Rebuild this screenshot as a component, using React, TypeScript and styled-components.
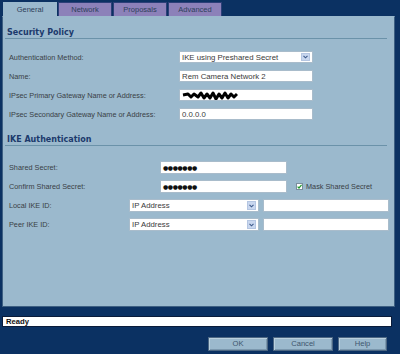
import React from "react";
import styled, { createGlobalStyle } from "styled-components";

const Global = createGlobalStyle`
  html, body { margin: 0; padding: 0; background: #0b3162; }
  body { width: 400px; height: 354px; overflow: hidden; font-family: "Liberation Sans", Arial, sans-serif; }
`;

const Page = styled.div`
  width: 400px;
  height: 354px;
  display: flex;
  flex-direction: column;
  background: #0b3162;
  box-sizing: border-box;
  padding-top: 2px;
`;

const TabBar = styled.div`
  display: flex;
  gap: 1px;
  padding-left: 3px;
  height: 14px;
  box-sizing: border-box;
`;

const Tab = styled.div<{ $active?: boolean }>`
  width: 54px;
  height: ${(p) => (p.$active ? "15px" : "14px")};
  box-sizing: border-box;
  background: ${(p) => (p.$active ? "#9bb9cd" : "#8c81b9")};
  border: 1px solid ${(p) => (p.$active ? "#9bb9cd" : "#2c3f78")};
  border-bottom: none;
  color: #2d3f5a;
  font-size: 7.5px;
  line-height: 13px;
  text-align: center;
  position: relative;
  z-index: 1;
`;

const Panel = styled.div`
  margin: 0 5px 0 2px;
  height: 291px;
  box-sizing: border-box;
  background: #9bb9cd;
  border: 1px solid #3d5f82;
  border-top-color: #9bb9cd;
  padding: 11px 7px 0 2px;
  display: flex;
  flex-direction: column;
`;

const SectionTitle = styled.div<{ $gap: number }>`
  margin-top: ${(p) => p.$gap}px;
  height: 11px;
  box-sizing: border-box;
  padding-left: 2px;
  border-bottom: 1px solid #6b92a9;
  font-family: "DejaVu Sans", Verdana, sans-serif;
  font-weight: bold;
  font-size: 8px;
  line-height: 10px;
  color: #1c3a6c;
`;

const Rows = styled.div<{ $gap: number; $rowGap: number }>`
  margin-top: ${(p) => p.$gap}px;
  display: flex;
  flex-direction: column;
  gap: ${(p) => p.$rowGap}px;
  padding-left: 4px;
`;

const Row = styled.div<{ $h: number }>`
  display: flex;
  align-items: center;
  height: ${(p) => p.$h}px;
`;

const Label = styled.div<{ $w: number }>`
  width: ${(p) => p.$w}px;
  flex: none;
  font-size: 7.3px;
  color: #3a3f45;
  white-space: nowrap;
`;

const Field = styled.div<{ $w: number }>`
  width: ${(p) => p.$w}px;
  height: 100%;
  flex: none;
  box-sizing: border-box;
  background: #ffffff;
  border: 1px solid #a9bccb;
  font-size: 7.8px;
  color: #3a3a3a;
  padding-left: 2px;
  display: flex;
  align-items: center;
  position: relative;
  white-space: nowrap;
  overflow: hidden;
`;

const Dots = styled.span`
  font-family: "DejaVu Sans", sans-serif;
  font-size: 6px;
  letter-spacing: -0.4px;
  color: #111;
  font-weight: bold;
`;

const Arrow = styled.span`
  position: absolute;
  right: 2px;
  top: 1px;
  bottom: 1px;
  width: 9px;
  background: #c9d7ef;
  border: 1px solid #b5c6e2;
  box-sizing: border-box;
  display: flex;
  align-items: center;
  justify-content: center;
`;

const Spacer = styled.div<{ $w: number }>`
  width: ${(p) => p.$w}px;
  flex: none;
`;

const Check = styled.span`
  width: 7px;
  height: 7px;
  box-sizing: border-box;
  background: #fff;
  border: 1px solid #7a8d9c;
  display: flex;
  align-items: center;
  justify-content: center;
  margin-right: 3px;
  flex: none;
`;

const CheckLabel = styled.span`
  font-size: 7.3px;
  color: #3a3f45;
  white-space: nowrap;
`;

const StatusBar = styled.div`
  margin: 9px 0 0 2px;
  width: 390px;
  height: 11px;
  box-sizing: border-box;
  background: #ffffff;
  border: 1px solid #0a1c3a;
  padding-left: 3px;
  font-weight: bold;
  font-size: 7.7px;
  line-height: 9px;
  color: #111;
`;

const ButtonRow = styled.div`
  margin-top: 10px;
  display: flex;
  justify-content: flex-end;
  gap: 5px;
  padding-right: 13px;
`;

const Button = styled.div<{ $w: number }>`
  width: ${(p) => p.$w}px;
  height: 14px;
  box-sizing: border-box;
  background: #9bb9cd;
  border: 1px solid #4c6783;
  box-shadow: inset 1px 1px 0 #b9d0de, inset -1px -1px 0 #7b98ae;
  color: #3e566d;
  font-size: 7.6px;
  line-height: 12px;
  text-align: center;
`;

const Chevron = () => (
  <svg width="5" height="4" viewBox="0 0 5 4">
    <path d="M0.5 0.8 L2.5 2.8 L4.5 0.8" fill="none" stroke="#3d5a8a" strokeWidth="1.1" />
  </svg>
);

const Scribble = () => (
  <svg width="56" height="9" viewBox="0 0 56 9">
    <path
      d="M1 4 L6 3 L9 6 L12 3 L16 6 L19 2 L22 7 L25 3 L28 7 L31 2 L34 8 L37 3 L40 7 L43 2 L46 7 L49 3 L52 6 L55 3"
      fill="none"
      stroke="#000"
      strokeWidth="3"
      strokeLinejoin="round"
    />
  </svg>
);

export default function App() {
  return (
    <>
      <Global />
      <Page>
        <TabBar>
          <Tab $active>General</Tab>
          <Tab>Network</Tab>
          <Tab>Proposals</Tab>
          <Tab>Advanced</Tab>
        </TabBar>
        <Panel>
          <SectionTitle $gap={0}>Security Policy</SectionTitle>
          <Rows $gap={12} $rowGap={7}>
            <Row $h={12}>
              <Label $w={170}>Authentication Method:</Label>
              <Field $w={134}>
                IKE using Preshared Secret
                <Arrow>
                  <Chevron />
                </Arrow>
              </Field>
            </Row>
            <Row $h={12}>
              <Label $w={170}>Name:</Label>
              <Field $w={134}>Rem Camera Network 2</Field>
            </Row>
            <Row $h={12}>
              <Label $w={170}>IPsec Primary Gateway Name or Address:</Label>
              <Field $w={134}>
                <Scribble />
              </Field>
            </Row>
            <Row $h={12}>
              <Label $w={170}>IPsec Secondary Gateway Name or Address:</Label>
              <Field $w={134}>0.0.0.0</Field>
            </Row>
          </Rows>
          <SectionTitle $gap={15}>IKE Authentication</SectionTitle>
          <Rows $gap={15} $rowGap={6}>
            <Row $h={13}>
              <Label $w={151}>Shared Secret:</Label>
              <Field $w={127}>
                <Dots>●●●●●●●</Dots>
              </Field>
            </Row>
            <Row $h={13}>
              <Label $w={151}>Confirm Shared Secret:</Label>
              <Field $w={127}>
                <Dots>●●●●●●●</Dots>
              </Field>
              <Spacer $w={9} />
              <Check>
                <svg width="5" height="5" viewBox="0 0 5 5">
                  <path d="M0.6 2.6 L2 4 L4.6 0.8" fill="none" stroke="#1f9a2a" strokeWidth="1.2" />
                </svg>
              </Check>
              <CheckLabel>Mask Shared Secret</CheckLabel>
            </Row>
            <Row $h={13}>
              <Label $w={120}>Local IKE ID:</Label>
              <Field $w={130}>
                IP Address
                <Arrow>
                  <Chevron />
                </Arrow>
              </Field>
              <Spacer $w={4} />
              <Field $w={126} />
            </Row>
            <Row $h={13}>
              <Label $w={120}>Peer IKE ID:</Label>
              <Field $w={130}>
                IP Address
                <Arrow>
                  <Chevron />
                </Arrow>
              </Field>
              <Spacer $w={4} />
              <Field $w={126} />
            </Row>
          </Rows>
        </Panel>
        <StatusBar>Ready</StatusBar>
        <ButtonRow>
          <Button $w={60}>OK</Button>
          <Button $w={60}>Cancel</Button>
          <Button $w={49}>Help</Button>
        </ButtonRow>
      </Page>
    </>
  );
}
